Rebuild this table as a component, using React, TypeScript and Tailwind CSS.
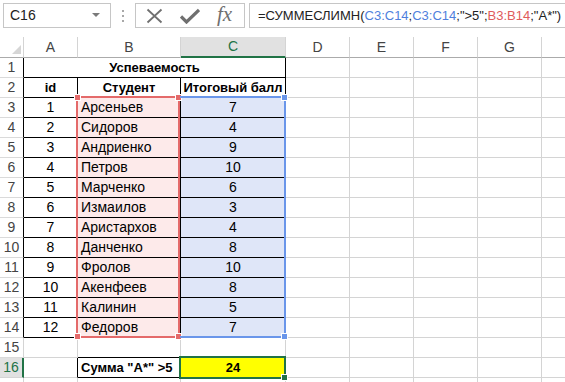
import React from 'react';

/* ---------- data ---------- */
const students: [number, string, number][] = [
  [1, 'Арсеньев', 7],
  [2, 'Сидоров', 4],
  [3, 'Андриенко', 9],
  [4, 'Петров', 10],
  [5, 'Марченко', 6],
  [6, 'Измаилов', 3],
  [7, 'Аристархов', 4],
  [8, 'Данченко', 8],
  [9, 'Фролов', 10],
  [10, 'Акенфеев', 8],
  [11, 'Калинин', 5],
  [12, 'Федоров', 7],
];

// last column is only partly on screen, its letter falls outside
const letters = ['A', 'B', 'C', 'D', 'E', 'F', 'G', ''];
const rows = Array.from({ length: 17 }, (_, i) => i + 1);

const font = { fontFamily: '"Liberation Sans", Arial, sans-serif' };

/* ---------- toolbar ---------- */
const FormulaBar = () => (
  <div className="h-[37px] flex items-start pt-[3px] pl-[3px] bg-white">
    <div className="w-[108px] h-[25px] border border-[#c6c6c6] flex items-center justify-between pl-[6px] pr-[10px] text-[14px] text-[#222]">
      <span>C16</span>
      <svg width="8" height="5" viewBox="0 0 8 5">
        <path d="M0 0h8L4 4z" fill="#7a7a7a" />
      </svg>
    </div>
    <div className="w-[24px] h-[25px] flex flex-col items-center justify-center gap-[3px]">
      <span className="w-[2px] h-[2px] bg-[#a8a8a8]" />
      <span className="w-[2px] h-[2px] bg-[#a8a8a8]" />
      <span className="w-[2px] h-[2px] bg-[#a8a8a8]" />
    </div>
    <div className="w-[110px] h-[25px] border border-[#c6c6c6] flex items-center pl-[10px] gap-[17px]">
      <svg width="17" height="16" viewBox="0 0 17 16">
        <path d="M1.5 1.5l14 13M15.5 1.5l-14 13" stroke="#6f6f6f" strokeWidth="1.8" fill="none" />
      </svg>
      <svg width="20" height="16" viewBox="0 0 20 16">
        <path d="M1 8.5l5.5 5.5L19 2" stroke="#6f6f6f" strokeWidth="3.2" fill="none" />
      </svg>
      <span
        className="text-[21px] italic text-[#6f6f6f] leading-none -mt-[3px]"
        style={{ fontFamily: '"Liberation Serif", "Times New Roman", serif' }}
      >
        fx
      </span>
    </div>
    <div className="ml-[4px] flex-1 h-[25px] border border-r-0 border-[#c6c6c6] flex items-center pl-[8px] text-[13px] text-[#222] whitespace-nowrap overflow-hidden">
      =СУММЕСЛИМН(<span className="text-[#4f7fdc]">C3:C14</span>;
      <span className="text-[#4f7fdc]">C3:C14</span>;"&gt;5";
      <span className="text-[#e05c5c]">B3:B14</span>;"A*")
    </div>
  </div>
);

/* ---------- cells ---------- */
const isTable = (r: number, c: number) => r >= 1 && r <= 14 && c <= 2;

function cellClass(r: number, c: number) {
  const right =
    (isTable(r, c) && !(r === 1 && c < 2)) || (r === 16 && c <= 1)
      ? 'border-r-black'
      : 'border-r-[#d4d4d4]';
  const bottom =
    isTable(r, c) || (r === 15 && c >= 1 && c <= 2) || (r === 16 && c === 1)
      ? 'border-b-black'
      : 'border-b-[#d4d4d4]';
  let bg = 'bg-white';
  if (r >= 3 && r <= 14 && c === 1) bg = 'bg-[#fdeaea]';
  if (r >= 3 && r <= 14 && c === 2) bg = 'bg-[#dfe6f8]';
  if (r === 16 && c === 2) bg = 'bg-[#ffff00]';
  return `h-5 border-r border-b ${right} ${bottom} ${bg}`;
}

function cellText(r: number, c: number): { text: string; bold?: boolean; left?: boolean } {
  if (r === 2) return { text: ['id', 'Студент', 'Итоговый балл'][c] ?? '', bold: true };
  if (r >= 3 && r <= 14) {
    const s = students[r - 3];
    if (c === 0) return { text: String(s[0]) };
    if (c === 1) return { text: s[1], left: true };
    if (c === 2) return { text: String(s[2]) };
  }
  if (r === 16 && c === 1) return { text: 'Сумма "A*" >5', bold: true, left: true };
  if (r === 16 && c === 2) return { text: '24', bold: true };
  return { text: '' };
}

const Handle = ({ className }: { className: string }) => (
  <span className={`absolute w-[7px] h-[7px] border border-white ${className}`} />
);

/* ---------- sheet ---------- */
const Sheet = () => (
  <div className="relative">
    <div className="grid grid-cols-[24px_54px_103px_105px_64px_64px_64px_64px_64px] text-[14px] leading-[19px] text-black">
      {/* column headers */}
      <div className="h-[21px] border-r border-b border-r-[#d4d4d4] border-b-[#ababab] relative">
        <svg className="absolute right-[2px] bottom-[3px]" width="9" height="9" viewBox="0 0 9 9">
          <path d="M9 0v9H0z" fill="#d6d6d6" />
        </svg>
      </div>
      {letters.map((l, c) =>
        c === 2 ? (
          <div
            key={c}
            className="h-[21px] border-r border-r-[#d4d4d4] border-b-2 border-b-[#217346] bg-[#e1e1e1] text-[#217346] flex items-center justify-center"
          >
            {l}
          </div>
        ) : (
          <div
            key={c}
            className="h-[21px] border-r border-b border-r-[#d4d4d4] border-b-[#ababab] text-[#444] flex items-center justify-center"
          >
            {l}
          </div>
        )
      )}

      {rows.map((r) => (
        <React.Fragment key={r}>
          {r === 16 ? (
            <div className="h-5 border-b border-b-[#d4d4d4] border-r-2 border-r-[#217346] bg-[#e1e1e1] text-[#217346] flex items-center justify-center">
              {r}
            </div>
          ) : (
            <div
              className={`h-5 border-b border-r border-b-[#dadada] ${
                r <= 14 ? 'border-r-black' : 'border-r-[#d4d4d4]'
              } text-[#444] flex items-center justify-center`}
            >
              {r < 17 ? r : ''}
            </div>
          )}
          {r === 1 ? (
            <>
              <div className="col-span-3 h-5 border-r border-b border-black font-bold text-[13px] flex items-center justify-center">
                Успеваемость
              </div>
              {[3, 4, 5, 6, 7].map((c) => (
                <div key={c} className={cellClass(r, c)} />
              ))}
            </>
          ) : (
            letters.map((_, c) => {
              const t = cellText(r, c);
              return (
                <div
                  key={c}
                  className={`${cellClass(r, c)} flex items-center whitespace-nowrap overflow-hidden ${
                    t.left ? 'justify-start pl-[3px]' : 'justify-center'
                  } ${t.bold ? 'font-bold text-[13px]' : ''}`}
                >
                  {t.text}
                </div>
              );
            })
          )}
        </React.Fragment>
      ))}
    </div>

    {/* reference highlight: B3:B14 */}
    <div className="absolute left-[76px] top-[59px] w-[104px] h-[242px] border-2 border-[#e46a6a] pointer-events-none">
      <Handle className="-left-[4px] -top-[4px] bg-[#e46a6a]" />
      <Handle className="-right-[4px] -top-[4px] bg-[#e46a6a]" />
      <Handle className="-left-[4px] -bottom-[4px] bg-[#e46a6a]" />
      <Handle className="-right-[4px] -bottom-[4px] bg-[#e46a6a]" />
    </div>
    {/* reference highlight: C3:C14 */}
    <div className="absolute left-[180px] top-[59px] w-[106px] h-[242px] border-2 border-l-0 border-[#6a96ea] pointer-events-none">
      <Handle className="-right-[4px] -top-[4px] bg-[#6a96ea]" />
      <Handle className="-right-[4px] -bottom-[4px] bg-[#6a96ea]" />
    </div>
    {/* active cell C16 */}
    <div className="absolute left-[179px] top-[319px] w-[107px] h-[23px] border-2 border-[#217346] pointer-events-none">
      <Handle className="-right-[4px] -bottom-[4px] bg-[#217346]" />
    </div>
  </div>
);

export default function App() {
  return (
    <div className="w-[565px] h-[382px] overflow-hidden bg-white" style={font}>
      <FormulaBar />
      <Sheet />
    </div>
  );
}
